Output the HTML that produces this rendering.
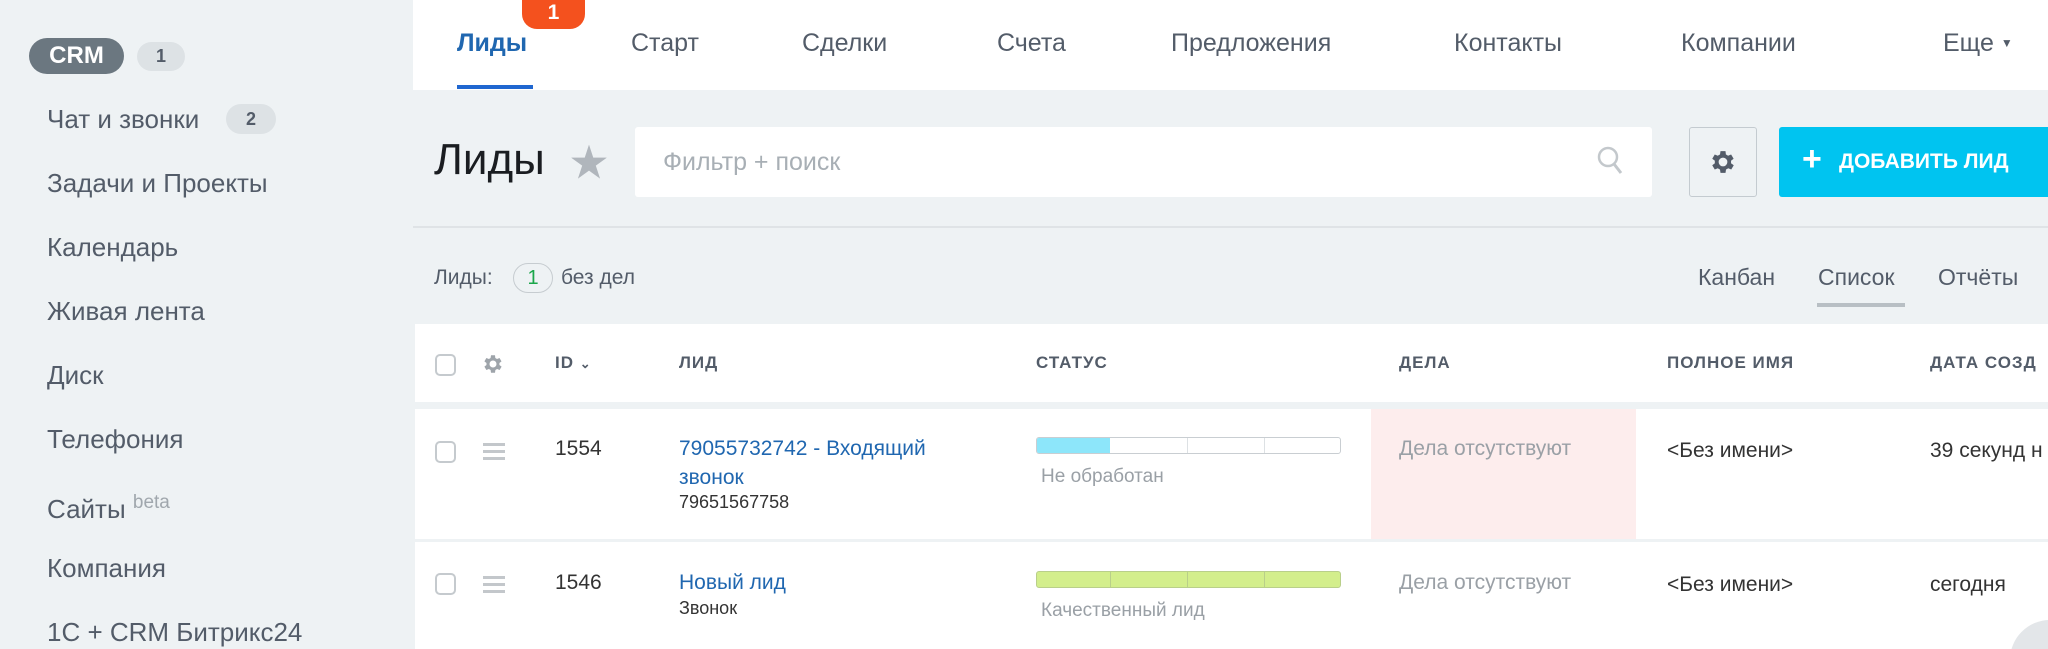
<!DOCTYPE html>
<html><head><meta charset="utf-8"><style>
*{margin:0;padding:0;box-sizing:border-box}
html{width:2048px;height:649px;overflow:hidden}
body{width:2048px;height:649px;overflow:hidden;background:#eef2f4;font-family:"Liberation Sans","Noto Sans CJK SC",sans-serif;position:relative;color:#535c69}
.a{position:absolute;white-space:nowrap}
.side{font-size:26px;color:#535c69;left:47px;line-height:30px}
.nav{font-size:25px;color:#535c69;top:28px;line-height:30px}
.th{font-size:17px;font-weight:bold;letter-spacing:1px;color:#535c69;top:353px}
.cb{position:absolute;width:21px;height:22px;border:2px solid #c5cace;border-radius:5px;background:#fff}
.hb{position:absolute;width:22px;height:3px;background:#c3c7cb;box-shadow:0 7px 0 #c3c7cb,0 14px 0 #c3c7cb}
.cell{font-size:21px;line-height:26px}
.link{color:#2067b0}
.gray{color:#9aa0a6}
</style></head><body>
<div class="a" style="left:413px;top:0;width:1635px;height:90px;background:#fff"></div>
<div class="a nav" style="left:457px;color:#2067b0;font-weight:bold">Лиды</div>
<div class="a" style="left:457px;top:85px;width:76px;height:4px;background:#2067d0"></div>
<div class="a" style="left:522px;top:0;width:63px;height:29px;background:#f4511e;border-radius:0 0 15px 15px;color:#fff;font-size:21px;font-weight:bold;text-align:center;line-height:26px">1</div>
<div class="a nav" style="left:631px">Старт</div>
<div class="a nav" style="left:802px">Сделки</div>
<div class="a nav" style="left:997px">Счета</div>
<div class="a nav" style="left:1171px">Предложения</div>
<div class="a nav" style="left:1454px">Контакты</div>
<div class="a nav" style="left:1681px">Компании</div>
<div class="a nav" style="left:1943px">Еще <span style="font-size:12px;vertical-align:4px">▼</span></div>
<div class="a" style="left:29px;top:38px;width:95px;height:36px;background:#6b7780;border-radius:18px;color:#fff;font-size:24px;font-weight:bold;text-align:center;line-height:36px">CRM</div>
<div class="a" style="left:137px;top:42px;width:48px;height:29px;background:#dde2e5;border-radius:15px;color:#535c69;font-size:18px;font-weight:bold;text-align:center;line-height:29px">1</div>
<div class="a side" style="top:104px">Чат и звонки</div>
<div class="a" style="left:226px;top:104px;width:50px;height:30px;background:#dde2e5;border-radius:15px;color:#535c69;font-size:18px;font-weight:bold;text-align:center;line-height:30px">2</div>
<div class="a side" style="top:168px">Задачи и Проекты</div>
<div class="a side" style="top:232px">Календарь</div>
<div class="a side" style="top:296px">Живая лента</div>
<div class="a side" style="top:360px">Диск</div>
<div class="a side" style="top:424px">Телефония</div>
<div class="a side" style="top:488px">Сайты <span style="font-size:19px;color:#a0a7ad;vertical-align:10px">beta</span></div>
<div class="a side" style="top:553px">Компания</div>
<div class="a side" style="top:617px">1С + CRM Битрикс24</div>
<div class="a" style="left:434px;top:133px;font-size:44px;color:#1a1d21;font-weight:300;line-height:54px">Лиды</div>
<div class="a" style="left:570px;top:132px;font-size:38px;color:#b0b6bc">★</div>
<div class="a" style="left:635px;top:127px;width:1017px;height:70px;background:#fff;border-radius:3px"></div>
<div class="a" style="left:663px;top:148px;font-size:25px;color:#a8afb5">Фильтр + поиск</div>
<svg class="a" style="left:1596px;top:145px" width="30" height="34" viewBox="0 0 30 34"><circle cx="12" cy="12" r="9" fill="none" stroke="#c3c8cc" stroke-width="2.5"/><line x1="18" y1="19" x2="25" y2="28" stroke="#c3c8cc" stroke-width="3"/></svg>
<div class="a" style="left:1689px;top:127px;width:68px;height:70px;border:1px solid #c4cbd0;border-radius:3px;background:#eef2f4"></div>
<svg class="a" style="left:1708px;top:147px" width="30" height="30" viewBox="0 0 24 24"><path fill="#535c69" d="M19.4 13a7.5 7.5 0 0 0 0-2l2.1-1.6-2-3.4-2.5 1a7 7 0 0 0-1.7-1L15 3.3h-4l-.4 2.7a7 7 0 0 0-1.7 1l-2.5-1-2 3.4L6.5 11a7.5 7.5 0 0 0 0 2l-2.1 1.6 2 3.4 2.5-1a7 7 0 0 0 1.7 1l.4 2.7h4l.4-2.7a7 7 0 0 0 1.7-1l2.5 1 2-3.4zM13 15.5a3.5 3.5 0 1 1 0-7 3.5 3.5 0 0 1 0 7z" transform="translate(-1 0)"/></svg>
<div class="a" style="left:1779px;top:127px;width:269px;height:70px;background:#00c4f0;border-radius:3px 0 0 3px"></div>
<div class="a" style="left:1802px;top:140px;font-size:34px;color:#fff;font-weight:bold">+</div>
<div class="a" style="left:1839px;top:150px;font-size:21px;color:#fff;font-weight:bold">ДОБАВИТЬ ЛИД</div>
<div class="a" style="left:413px;top:226px;width:1635px;height:2px;background:#dfe3e6"></div>
<div class="a" style="left:434px;top:266px;font-size:21px;color:#535c69">Лиды:</div>
<div class="a" style="left:513px;top:263px;width:40px;height:30px;border:1px solid #c6ccd0;border-radius:15px;color:#1aa64a;font-size:20px;text-align:center;line-height:28px">1</div>
<div class="a" style="left:561px;top:266px;font-size:21px;color:#535c69">без дел</div>
<div class="a" style="left:1698px;top:264px;font-size:23px">Канбан</div>
<div class="a" style="left:1818px;top:264px;font-size:23px">Список</div>
<div class="a" style="left:1817px;top:303px;width:88px;height:4px;background:#b8bfc4"></div>
<div class="a" style="left:1938px;top:264px;font-size:23px">Отчёты</div>
<div class="a" style="left:415px;top:324px;width:1633px;height:78px;background:#fff"></div>
<div class="a" style="left:415px;top:409px;width:1633px;height:130px;background:#fff"></div>
<div class="a" style="left:415px;top:542px;width:1633px;height:107px;background:#fff"></div>
<div class="a" style="left:1371px;top:409px;width:265px;height:130px;background:#fdeded"></div>
<div class="cb" style="left:435px;top:354px"></div>
<svg class="a" style="left:481px;top:352px" width="24" height="24" viewBox="0 0 24 24"><path fill="#9ea4aa" d="M19.4 13a7.5 7.5 0 0 0 0-2l2.1-1.6-2-3.4-2.5 1a7 7 0 0 0-1.7-1L15 3.3h-4l-.4 2.7a7 7 0 0 0-1.7 1l-2.5-1-2 3.4L6.5 11a7.5 7.5 0 0 0 0 2l-2.1 1.6 2 3.4 2.5-1a7 7 0 0 0 1.7 1l.4 2.7h4l.4-2.7a7 7 0 0 0 1.7-1l2.5 1 2-3.4zM13 15.5a3.5 3.5 0 1 1 0-7 3.5 3.5 0 0 1 0 7z" transform="translate(-1 0)"/></svg>
<div class="a th" style="left:555px">ID <span style="font-size:13px">⌄</span></div>
<div class="a th" style="left:679px">ЛИД</div>
<div class="a th" style="left:1036px">СТАТУС</div>
<div class="a th" style="left:1399px">ДЕЛА</div>
<div class="a th" style="left:1667px">ПОЛНОЕ ИМЯ</div>
<div class="a th" style="left:1930px">ДАТА СОЗД</div>
<div class="cb" style="left:435px;top:441px"></div>
<div class="hb" style="left:483px;top:443px"></div>
<div class="a cell" style="left:555px;top:436px;color:#333">1554</div>
<div class="a cell link" style="left:679px;top:436px">79055732742 - Входящий</div>
<div class="a cell link" style="left:679px;top:465px">звонок</div>
<div class="a" style="left:679px;top:492px;font-size:18px;color:#333">79651567758</div>
<div class="a" style="left:1036px;top:437px;width:305px;height:17px;border:1px solid #c9ced2;border-radius:3px;background:#fff;overflow:hidden">
<div class="a" style="left:0;top:0;width:73px;height:15px;background:#8de6fa"></div>
<div class="a" style="left:150px;top:0;width:1px;height:15px;background:#dde1e4"></div>
<div class="a" style="left:227px;top:0;width:1px;height:15px;background:#dde1e4"></div></div>
<div class="a gray" style="left:1041px;top:466px;font-size:19px">Не обработан</div>
<div class="a cell gray" style="left:1399px;top:436px">Дела отсутствуют</div>
<div class="a cell" style="left:1667px;top:438px;color:#333">&lt;Без имени&gt;</div>
<div class="a cell" style="left:1930px;top:438px;color:#333">39 секунд н</div>
<div class="cb" style="left:435px;top:573px"></div>
<div class="hb" style="left:483px;top:576px"></div>
<div class="a cell" style="left:555px;top:570px;color:#333">1546</div>
<div class="a cell link" style="left:679px;top:570px">Новый лид</div>
<div class="a" style="left:679px;top:598px;font-size:18px;color:#333">Звонок</div>
<div class="a" style="left:1036px;top:571px;width:305px;height:17px;border:1px solid #b9cf8a;border-radius:3px;background:#d3ee8c;overflow:hidden">
<div class="a" style="left:73px;top:0;width:1px;height:15px;background:#b9cf8a"></div>
<div class="a" style="left:150px;top:0;width:1px;height:15px;background:#b9cf8a"></div>
<div class="a" style="left:227px;top:0;width:1px;height:15px;background:#b9cf8a"></div></div>
<div class="a gray" style="left:1041px;top:600px;font-size:19px">Качественный лид</div>
<div class="a cell gray" style="left:1399px;top:570px">Дела отсутствуют</div>
<div class="a cell" style="left:1667px;top:572px;color:#333">&lt;Без имени&gt;</div>
<div class="a cell" style="left:1930px;top:572px;color:#333">сегодня</div>
<div class="a" style="left:2010px;top:620px;width:38px;height:29px;overflow:hidden"><div style="width:80px;height:80px;border-radius:50%;background:#e3e6e9"></div></div>
</body></html>
